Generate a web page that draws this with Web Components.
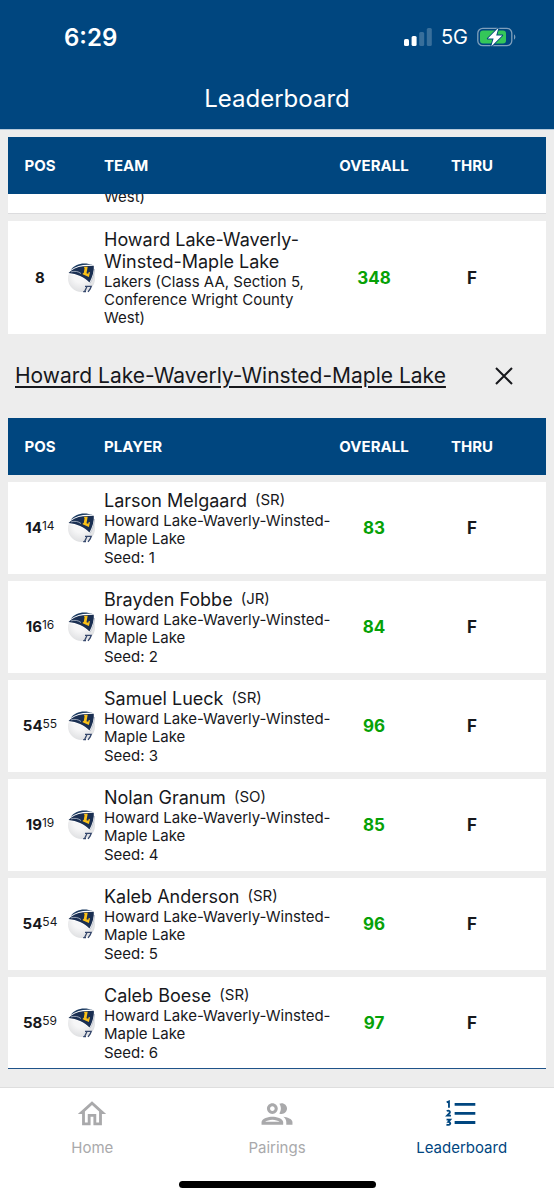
<!DOCTYPE html>
<html lang="en">
<head>
<meta charset="utf-8">
<meta name="viewport" content="width=device-width, initial-scale=1">
<title>Leaderboard</title>
<style>
  html, body { margin: 0; height: 100%; }
  body {
    --brand: #00467f;
    --ink: #17181c;
    --good: #06a106;
    --muted: #a9a9ab;
    --page: #ededed;
    font-family: Inter, "Liberation Sans", sans-serif;
    color: var(--ink);
    background: #fff;
  }
</style>
</head>
<body>
<app-shell>
  <status-bar slot="top" time="6:29" network="5G"></status-bar>
  <span slot="title">Leaderboard</span>
  <score-table id="teams" label="Team" class="teams"></score-table>
  <team-heading>Howard Lake-Waverly-Winsted-Maple Lake</team-heading>
  <score-table id="players" label="Player" class="players"></score-table>
  <tab-bar slot="bottom">
    <tab-item icon="home">Home</tab-item>
    <tab-item icon="people">Pairings</tab-item>
    <tab-item icon="list" active>Leaderboard</tab-item>
  </tab-bar>
</app-shell>

<script>
const define = (name, html, setup) => customElements.define(name, class extends HTMLElement {
  constructor() {
    super();
    this.attachShadow({ mode: 'open' });
    this.shadowRoot.innerHTML = html;
  }
  connectedCallback() { if (setup) setup(this, this.shadowRoot); }
});

define('app-shell', `
  <style>
    :host { display: flex; flex-direction: column; min-height: 100vh; background: var(--page); }
    header { background: var(--brand); color: #fff; border-bottom: 1px solid #b5c9da; }
    h1 { margin: 0; padding: 9px 0 14px; font-size: 24px; line-height: 32px; font-weight: 400; text-align: center; }
    main { flex: 1; padding: 7px 8px 0; }
  </style>
  <header><slot name="top"></slot><h1><slot name="title"></slot></h1></header>
  <main><slot></slot></main>
  <slot name="bottom"></slot>`);

define('status-bar', `
  <style>
    :host { display: flex; align-items: center; justify-content: space-between; padding: 0 38px 0 64px; height: 74px; }
    .time { font-size: 24px; font-weight: 600; }
    .right { display: flex; align-items: center; gap: 9px; font-size: 20px; }
    svg { display: block; }
  </style>
  <span class="time"></span>
  <span class="right">
    <svg width="28" height="18" viewBox="0 0 28 18" fill="#fff" aria-label="Signal">
      <rect x="0" y="11" width="5" height="7" rx="1.5"/><rect x="7.6" y="8" width="5" height="10" rx="1.5"/>
      <g opacity=".22"><rect x="15.2" y="4" width="5" height="14" rx="1.5"/><rect x="22.8" y="0" width="5" height="18" rx="1.5"/></g>
    </svg>
    <span class="net"></span>
    <svg width="39" height="20" viewBox="0 0 39 20" aria-label="Battery charging">
      <rect x=".8" y="1.3" width="34" height="17.4" rx="5" fill="none" stroke="#7f9fbc" stroke-width="1.3"/>
      <path d="M37 7.5c1.8.6 1.8 4.4 0 5z" fill="#7f9fbc"/>
      <rect x="3" y="3.4" width="26" height="13.2" rx="3" fill="#34c759"/>
      <path d="M21.500.8 10.800 11.600h5.800L14.200 19.400 25.200 8.400h-6z" fill="#fff" stroke="#00467f" stroke-width="1.8" paint-order="stroke" stroke-linejoin="round"/>
    </svg>
  </span>`, (el, root) => {
  root.querySelector('.time').textContent = el.getAttribute('time');
  root.querySelector('.net').textContent = el.getAttribute('network');
});

define('team-logo', `
  <style>:host { display: block; } svg { display: block; width: 30px; height: 32px; }</style>
  <svg viewBox="0 0 30 32" aria-label="Team logo">
    <defs>
      <radialGradient id="ball" cx=".45" cy=".4" r=".6"><stop offset=".4" stop-color="#f6f6f7"/><stop offset="1" stop-color="#dfe0e2"/></radialGradient>
    </defs>
    <circle cx="15.500" cy="16.500" r="13.500" fill="url(#ball)"/>
    <path d="M0 12C4 4 12 0 20 0c5 0 9 3 9 6L24 22C18 15 9 12 0 12z" fill="#fff"/>
    <path d="M2.500 10.900C6 7.300 11 5 17 4.300L27.800 3.800C28.300 9 26.500 15 23.500 20.500 18 14.800 11 11.800 2.500 10.900z" fill="#1a2f52"/>
    <path d="M4.500 8C9 2 17.500-.6 27.300 3.200 18.500 2 11 3.600 4.500 8z" fill="#1a3a60"/>
    <path d="M5 9.900C9 8.800 12 9.300 15 11.500" fill="none" stroke="#b9c2cf" stroke-width=".8"/>
    <path d="M28.500 7C28.500 12 26.500 17.500 24 21.500" fill="none" stroke="#c3c8d2" stroke-width="1"/>
    <path d="M18.300 4.800h3.400l-1.200 6.400 1.700.5.600-1.700 1.200.3-1.100 4.700-6.300-2.800.4-1.200.7.200.9-4.900-.5-.2z" fill="#fbc117"/>
    <path d="M19 24.300h6.200l-1 2.600-2.200 3M21 24.500 18.600 29.500M17.200 29.700h2.800" fill="none" stroke="#34466b" stroke-width="1.300"/>
  </svg>`);

define('score-table', `
  <style>
    :host { display: block; }
    table { width: 100%; border-collapse: collapse; table-layout: fixed; }
    .c-pos { width: 58px; } .c-logo { width: 30px; } .c-total { width: 72px; } .c-thru { width: 136px; }
    th { height: 57px; padding: 0; background: var(--brand); color: #fff; font-size: 15px; line-height: 20px; font-weight: 700; text-align: center; }
    th.who { text-align: left; padding-left: 8px; }
    td { padding: 0; background: #fff; text-align: center; vertical-align: middle; font-weight: 700; font-size: 17px; line-height: 22px; }
    .pos { padding-left: 6px; white-space: nowrap; }
    td.pos { font-size: 15px; }
    sup { font-size: 12px; font-weight: 400; line-height: 0; vertical-align: 3px; }
    td.who { padding: 8px 0 7px 8px; text-align: left; font-weight: 400; font-size: 15px; line-height: 18px; }
    .name { font-size: 18px; line-height: 22px; }
    .seed { padding-top: 1px; }
    .grade { font-size: 15px; margin-left: 3px; vertical-align: 2px; line-height: 0; }
    .total { color: var(--good); }
    .thru { padding-right: 12px; }
    .gap td { height: 7px; background: none; }
    :host(.teams) .gap td { border-top: 1px solid #dcdcde; }
    .tail { height: 12px; padding-bottom: 7px; overflow: hidden; display: flex; align-items: flex-end; }
    td.cut { padding: 0 0 0 8px; text-align: left; font-weight: 400; font-size: 15px; line-height: 18px; }
    :host(.players) tr:last-child td { box-shadow: inset 0 -1px #1f5389; }
  </style>
  <table>
    <colgroup><col class="c-pos"><col class="c-logo"><col><col class="c-total"><col class="c-thru"></colgroup>
    <thead><tr><th class="pos" scope="col">POS</th><th></th><th class="who" scope="col"></th><th scope="col">OVERALL</th><th class="thru" scope="col">THRU</th></tr></thead>
    <tbody></tbody>
  </table>`, (el, root) => {
  root.querySelector('th.who').textContent = el.getAttribute('label').toUpperCase();
});

define('team-heading', `
  <style>
    :host { display: flex; align-items: center; justify-content: space-between; height: 84px; padding: 0 28px 0 7px; }
    h2 { margin: 0; font-size: 21px; line-height: 28px; font-weight: 400; }
    a { color: inherit; text-decoration: underline; text-decoration-thickness: 2px; text-underline-offset: 3px; }
    button { display: flex; padding: 4px; border: 0; background: none; color: inherit; }
  </style>
  <h2><a href="#team"><slot></slot></a></h2>
  <button type="button" aria-label="Close"><svg width="20" height="20" viewBox="0 0 20 20" fill="none" stroke="currentColor" stroke-width="2"><path d="M2 2 18 18M18 2 2 18"/></svg></button>`);

define('tab-bar', `
  <style>
    :host { display: block; background: #fff; border-top: 1px solid #dedede; }
    nav { display: grid; grid-template-columns: repeat(3, 1fr); padding-top: 9px; }
    .grip { width: 197px; height: 7px; margin: 23px auto 12px; border-radius: 4px; background: #000; }
  </style>
  <nav><slot></slot></nav><div class="grip"></div>`);

const icons = {
  home: ['0 0 24 24', '<path d="M12 5.690 17 10.190V18H15V12H9V18H7V10.190L12 5.690M12 3 2 12H5V20H11V14H13V20H19V12H22"/>'],
  people: ['1 1 22 22', '<path d="M9 13.750c-2.340 0-7 1.170-7 3.500V19h14v-1.750c0-2.330-4.660-3.500-7-3.500zM4.340 17c.84-.58 2.870-1.250 4.660-1.250s3.820.67 4.660 1.250H4.340zM9 12c1.930 0 3.500-1.570 3.500-3.500S10.930 5 9 5 5.500 6.570 5.500 8.500 7.070 12 9 12zm0-5c.83 0 1.500.67 1.500 1.500S9.830 10 9 10s-1.500-.67-1.500-1.500S8.170 7 9 7zm7.040 6.810c1.160.84 1.960 1.960 1.960 3.440V19h4v-1.750c0-2.020-3.500-3.170-5.960-3.440zM15 12c1.930 0 3.500-1.570 3.500-3.500S16.930 5 15 5c-.54 0-1.040.13-1.500.35.63.89 1 1.980 1 3.150s-.37 2.260-1 3.150c.46.22.96.35 1.500.35z"/>'],
  list: ['1 0 24 24', '<path d="M7.800 4.200h14.600v2H7.800zM7.800 10.600h14.600v2H7.800zM7.800 17h14.600v2H7.800z"/><path d="M2.200 3.800 3.800 3.100V7.500M2.200 9.900C4 9.100 5 10.500 4 11.600L2.500 13.200H5.200M2.100 16H4.700L3.300 17.600C5.600 17.800 5 20.400 2 19.500" fill="none" stroke="currentColor" stroke-width="1.300"/>']
};
define('tab-item', `
  <style>
    :host { display: block; color: var(--muted); }
    :host([active]) { color: var(--brand); }
    a { display: flex; flex-direction: column; align-items: center; gap: 7px; color: inherit; text-decoration: none; font-size: 15px; line-height: 20px; }
    svg { display: block; width: 34px; height: 34px; fill: currentColor; }
  </style>
  <a href="#"><svg aria-hidden="true"></svg><slot></slot></a>`, (el, root) => {
  const name = el.getAttribute('icon');
  const [box, shape] = icons[name];
  const svg = root.querySelector('svg');
  root.querySelector('a').href = '#' + name;
  svg.setAttribute('viewBox', box);
  svg.innerHTML = shape;
});

const gap = '<tr class="gap"><td colspan="5"></td></tr>';
const row = (pos, who, total) => `<tr><td class="pos">${pos}</td><td><team-logo></team-logo></td><td class="who">${who}</td><td class="total">${total}</td><td class="thru">F</td></tr>`;
const school = 'Howard Lake-Waverly-Winsted-Maple Lake';

document.getElementById('teams').shadowRoot.querySelector('tbody').innerHTML =
  '<tr><td></td><td></td><td class="cut"><div class="tail">West)</div></td><td></td><td></td></tr>' + gap +
  row('8', `<div class="name">${school}</div><div>Lakers (Class AA, Section 5, Conference Wright County West)</div>`, 348);

document.getElementById('players').shadowRoot.querySelector('tbody').innerHTML = [
  [14, 14, 'Larson Melgaard', 'SR', 83],
  [16, 16, 'Brayden Fobbe', 'JR', 84],
  [54, 55, 'Samuel Lueck', 'SR', 96],
  [19, 19, 'Nolan Granum', 'SO', 85],
  [54, 54, 'Kaleb Anderson', 'SR', 96],
  [58, 59, 'Caleb Boese', 'SR', 97]
].map(([pos, sup, name, grade, total], i) => gap + row(`${pos}<sup>${sup}</sup>`,
  `<div class="name">${name} <span class="grade">(${grade})</span></div><div>${school}</div><div class="seed">Seed: ${i + 1}</div>`, total)).join('');
</script>
</body>
</html>
